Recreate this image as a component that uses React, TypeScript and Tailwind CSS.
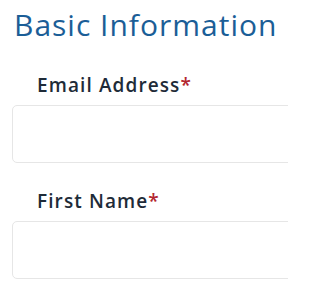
export default function App() {
  return (
    <div className="h-[288px] w-[288px] overflow-hidden bg-white font-['Open_Sans',sans-serif]">
      <div className="w-[320px] pl-[12px] pt-[5px]">
        <h2 className="pl-[2px] text-[30px] leading-[40px] tracking-[1px] text-[#1b5e97]">Basic Information</h2>
        <div className="mt-[28px]">
          <label className="block pl-[25px] text-[19px] font-semibold leading-[24px] tracking-[1.1px] text-[#1e2b38]">
            Email Address<span className="text-[#b3262f]">*</span>
          </label>
          <div className="mt-[8px] h-[58px] rounded-[5px] border border-[#e6e6e6] bg-white" />
        </div>
        <div className="mt-[26px]">
          <label className="block pl-[25px] text-[19px] font-semibold leading-[24px] tracking-[1.1px] text-[#1e2b38]">
            First Name<span className="text-[#b3262f]">*</span>
          </label>
          <div className="mt-[8px] h-[58px] rounded-[5px] border border-[#e6e6e6] bg-white" />
        </div>
      </div>
    </div>
  );
}
